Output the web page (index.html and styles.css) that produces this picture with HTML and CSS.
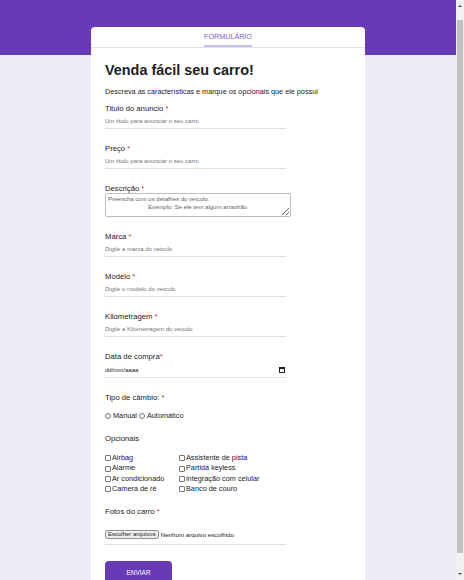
FILE: index.html
```html
<!DOCTYPE html>
<html lang="pt-BR">
<head>
<meta charset="utf-8">
<title>Venda fácil seu carro</title>
<link rel="stylesheet" href="styles.css">
</head>
<body>
<div class="page">
<header class="topbar"></header>
<main class="card">
  <nav class="tabs"><span class="tab">FORMULÁRIO</span></nav>
  <form class="form">
    <h1 class="title">Venda fácil seu carro!</h1>
    <p class="lead">Descreva as características e marque os opcionais que ele possui</p>

    <div class="field">
      <label class="label">Titulo do anuncio <span class="req">*</span></label>
      <input class="line-input" type="text" placeholder="Um titulo para anunciar o seu carro">
    </div>
    <div class="field">
      <label class="label">Preço <span class="req">*</span></label>
      <input class="line-input" type="text" placeholder="Um titulo para anunciar o seu carro">
    </div>
    <div class="field">
      <label class="label">Descrição <span class="req">*</span></label>
      <textarea class="area" placeholder="Preencha com os detalhes do veiculo.&#10;                        Exemplo: Se ele tem algum arranhão"></textarea>
    </div>
    <div class="field">
      <label class="label">Marca <span class="req">*</span></label>
      <input class="line-input" type="text" placeholder="Digite a marca do veiculo">
    </div>
    <div class="field">
      <label class="label">Modelo <span class="req">*</span></label>
      <input class="line-input" type="text" placeholder="Digite o modelo do veiculo">
    </div>
    <div class="field">
      <label class="label">Kilometragem <span class="req">*</span></label>
      <input class="line-input" type="text" placeholder="Digite a Kilometragem do veiculo">
    </div>
    <div class="field field-date">
      <label class="label">Data de compra<span class="req">*</span></label>
      <div class="date-box">
        <input class="date-input" type="text" placeholder="dd/mm/aaaa">
        <svg class="cal" width="6" height="6" viewBox="0 0 6 6" aria-hidden="true">
          <rect x="0.5" y="0.5" width="5" height="5" fill="none" stroke="#202124" stroke-width="1"/>
          <rect x="0.5" y="0.5" width="5" height="1.6" fill="#202124"/>
        </svg>
      </div>
    </div>
    <div class="field field-radio">
      <label class="label">Tipo de câmbio: <span class="req">*</span></label>
      <div class="radios">
        <label class="opt"><input class="radio" type="radio" name="cambio">Manual</label>
        <label class="opt"><input class="radio" type="radio" name="cambio">Automático</label>
      </div>
    </div>
    <div class="field field-checks">
      <label class="label">Opcionais</label>
      <div class="checks">
        <label class="opt"><input class="check" type="checkbox">Airbag</label>
        <label class="opt"><input class="check" type="checkbox">Assistente de pista</label>
        <label class="opt"><input class="check" type="checkbox">Alarme</label>
        <label class="opt"><input class="check" type="checkbox">Partida keyless</label>
        <label class="opt"><input class="check" type="checkbox">Ar condicionado</label>
        <label class="opt"><input class="check" type="checkbox">integração com celular</label>
        <label class="opt"><input class="check" type="checkbox">Camera de ré</label>
        <label class="opt"><input class="check" type="checkbox">Banco de couro</label>
      </div>
    </div>
    <div class="field field-file">
      <label class="label">Fotos do carro <span class="req">*</span></label>
      <div class="file-row">
        <button class="file-btn" type="button">Escolher arquivos</button>
        <span class="file-name">Nenhum arquivo escolhido</span>
      </div>
    </div>
    <button class="submit" type="submit">ENVIAR</button>
  </form>
</main>
</div>
<div class="scrollbar" aria-hidden="true">
  <span class="sb-up"></span>
  <span class="sb-thumb"></span>
  <span class="sb-down"></span>
</div>
</body>
</html>
```
FILE: styles.css
```css
html {
  background: #f0ebf8;
}
body {
  margin: 0;
  font-family: "Liberation Sans", Arial, sans-serif;
  color: #202124;
  background: #f0ebf8;
}
.page {
  margin-right: 8px;
  padding-bottom: 3px;
}
.scrollbar {
  position: fixed;
  top: 0;
  right: 0;
  width: 8px;
  height: 100vh;
  background: #f1f1f1;
}
.sb-thumb {
  position: absolute;
  top: 20px;
  bottom: 27px;
  left: 1px;
  width: 6px;
  background: #c1c1c1;
}
.sb-up,
.sb-down {
  position: absolute;
  left: 2px;
  width: 0;
  height: 0;
  border-left: 2px solid transparent;
  border-right: 2px solid transparent;
}
.sb-up {
  top: 5px;
  border-bottom: 2px solid #505050;
}
.sb-down {
  bottom: 5px;
  border-top: 2px solid #505050;
}
.topbar {
  height: 55px;
  background: #673ab7;
}
.card {
  width: 274px;
  margin: -28px auto 0;
  background: #ffffff;
  border-radius: 4px 4px 0 0;
}
.tabs {
  display: flex;
  justify-content: center;
  border-bottom: 1px solid #e0e0e0;
}
.tab {
  display: flex;
  align-items: center;
  height: 18px;
  border-bottom: 2px solid #cbbde8;
  font-size: 7.2px;
  color: #8160c4;
}
.form {
  padding: 14px 14px 10px;
}
.title {
  margin: 0;
  font-size: 14.4px;
  line-height: 17px;
  font-weight: bold;
  color: #202124;
}
.lead {
  margin: 8px 0 8px;
  font-size: 7.25px;
  line-height: 9px;
  color: #202124;
}
.field {
  margin-bottom: 15px;
}
.label {
  display: block;
  font-size: 7.7px;
  line-height: 9px;
  color: #202124;
}
.req {
  color: #d93025;
}
.line-input {
  display: block;
  box-sizing: border-box;
  width: 181px;
  height: 15px;
  margin: 1px 0 0;
  padding: 0;
  border: none;
  border-bottom: 1px solid #e0e0e0;
  font-family: inherit;
  font-size: 6px;
  color: #202124;
  background: transparent;
  outline: none;
}
.line-input::placeholder {
  color: #70757a;
}
.area {
  display: block;
  box-sizing: border-box;
  width: 186px;
  height: 24px;
  margin: 0;
  padding: 2px 2px;
  border: 1px solid #bdbdbd;
  border-radius: 2px;
  font-family: inherit;
  font-size: 6px;
  line-height: 7.5px;
  color: #202124;
}
.area::placeholder {
  color: #5f6368;
}
.field-date {
  margin-top: 2px;
}
.date-box {
  display: flex;
  align-items: center;
  box-sizing: border-box;
  width: 181px;
  height: 16px;
  margin-top: 1px;
  border-bottom: 1px solid #e0e0e0;
}
.date-input {
  flex: 1;
  min-width: 0;
  padding: 0;
  border: none;
  font-family: inherit;
  font-size: 6px;
  background: transparent;
  outline: none;
}
.date-input::placeholder {
  color: #202124;
}
.cal {
  margin-right: 1px;
}
.field-radio {
  margin-bottom: 13px;
}
.radios {
  display: flex;
  gap: 2px;
  margin-top: 9px;
  height: 10px;
  align-items: center;
}
.opt {
  display: flex;
  align-items: center;
  font-size: 7.3px;
  line-height: 10.4px;
  color: #202124;
  white-space: nowrap;
}
.radio,
.check {
  appearance: none;
  -webkit-appearance: none;
  box-sizing: border-box;
  width: 6px;
  height: 6px;
  margin: 0 1px 0 0;
  border: 1px solid #767676;
  background: #ffffff;
}
.radio {
  border-radius: 50%;
  margin-right: 2px;
}
.check {
  border-radius: 1px;
}
.field-checks {
  margin-bottom: 12px;
}
.checks {
  display: grid;
  grid-template-columns: 74px auto;
  margin-top: 10px;
}
.file-row {
  display: flex;
  align-items: center;
  gap: 2px;
  box-sizing: border-box;
  width: 181px;
  height: 29px;
  padding-top: 14px;
  padding-bottom: 4px;
  border-bottom: 1px solid #e0e0e0;
}
.file-btn {
  height: 9px;
  padding: 0 2px;
  border: 1px solid #8f8f8f;
  border-radius: 2px;
  background: #efefef;
  font-family: inherit;
  font-size: 6px;
  line-height: 7px;
  color: #202124;
}
.file-name {
  font-size: 6.2px;
  color: #202124;
}
.field-file {
  margin-bottom: 16px;
}
.submit {
  display: block;
  width: 67px;
  height: 24px;
  padding: 0;
  border: none;
  border-radius: 4px;
  background: #673ab7;
  color: #ffffff;
  font-family: inherit;
  font-size: 6.5px;
}
```
